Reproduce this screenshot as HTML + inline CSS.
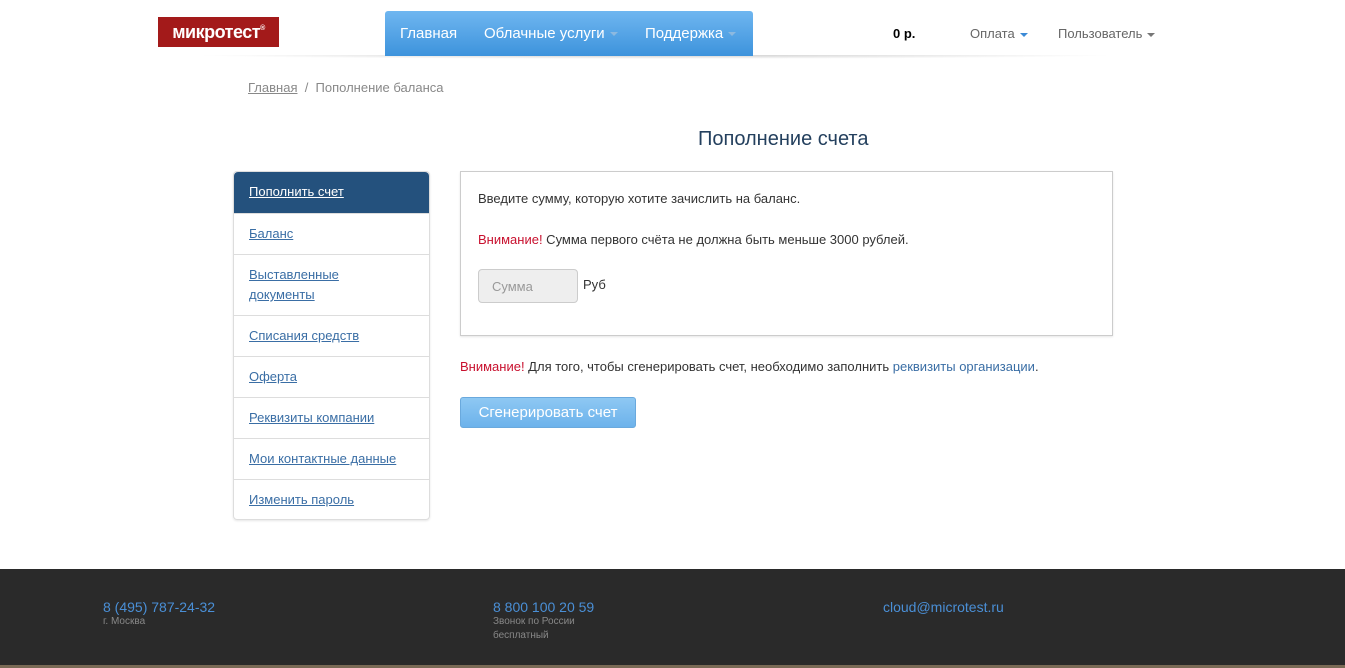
<!DOCTYPE html>
<html><head><meta charset="utf-8"><style>
*{margin:0;padding:0;box-sizing:border-box}
body{width:1345px;height:668px;overflow:hidden;background:#fff;font-family:"Liberation Sans","DejaVu Sans",sans-serif;font-size:13px;color:#333;position:relative}
.abs{position:absolute}
.logo{left:158px;top:17px;width:121px;height:30px;background:#a31a1a;color:#fff;font-size:18px;font-weight:bold;text-align:center;line-height:30px;letter-spacing:-0.5px}
.logo sup{font-size:7px;position:relative;top:-8px;vertical-align:baseline;line-height:0}
.nav{left:385px;top:11px;width:368px;height:45px;background:linear-gradient(#6fb6f0,#3d93dc);border-radius:3px 3px 0 0;color:#fff;font-size:15px}
.nav span{position:absolute;top:14px}
.car{display:inline-block;width:0;height:0;border-left:4px solid transparent;border-right:4px solid transparent;border-top:4px solid #8cb9e0;vertical-align:middle;margin-left:5px}
.shadow{left:190px;top:55px;width:930px;height:4px;background:radial-gradient(ellipse at top,#ccc,rgba(255,255,255,0) 70%)}
.top{top:26px;font-size:13px;color:#666}
.crumb{left:248px;top:80px;color:#888}
.crumb u{color:#888}
h1{position:absolute;left:698px;top:128px;font-size:20px;font-weight:normal;color:#24405e}
.side{left:233px;top:171px;width:197px;height:349px;border:1px solid #ddd;border-radius:4px;box-shadow:0 1px 2px rgba(0,0,0,.1)}
.side div{border-bottom:1px solid #ddd;padding:0 15px;color:#3a6ea5;text-decoration:underline;font-size:13px;line-height:20px}
.side .act{background:#24517d;color:#fff;border-radius:4px 4px 0 0;height:42px;padding-top:10px}
.box{left:460px;top:171px;width:653px;height:165px;border:1px solid #ccc;box-shadow:0 1px 2px rgba(0,0,0,.1)}
.red{color:#c8102e}
.inp{left:478px;top:269px;width:100px;height:34px;background:#eee;border:1px solid #ccc;border-radius:4px;color:#999;padding:9px 13px}
.btn{left:460px;top:397px;width:176px;height:31px;background:linear-gradient(#8ec8f3,#6cb2eb);border:1px solid #6aa9dd;border-radius:3px;color:#fff;font-size:15px;text-align:center;line-height:29px}
.foot{left:0;top:569px;width:1345px;height:99px;background:#2a2a2a}
.strip{left:0;top:665px;width:1345px;height:3px;background:#7a6a55}
.ph{color:#4a8fd6;font-size:14px}
.sm{color:#888;font-size:10px;line-height:14px}
</style></head><body>
<div class="abs logo">микротест<sup>®</sup></div>
<div class="abs shadow"></div>
<div class="abs nav"><span style="left:15px">Главная</span><span style="left:99px">Облачные услуги<i class="car"></i></span><span style="left:260px">Поддержка<i class="car"></i></span></div>
<div class="abs top" style="left:893px;color:#000;font-weight:bold">0 р.</div>
<div class="abs top" style="left:970px">Оплата<i class="car" style="border-top-color:#3b8ad6"></i></div>
<div class="abs top" style="left:1058px">Пользователь<i class="car" style="border-top-color:#777"></i></div>
<div class="abs crumb"><u>Главная</u> &nbsp;/&nbsp; Пополнение баланса</div>
<h1>Пополнение счета</h1>
<div class="abs side">
<div class="act">Пополнить счет</div>
<div style="height:41px;padding-top:10px">Баланс</div>
<div style="height:61px;padding-top:10px">Выставленные<br>документы</div>
<div style="height:41px;padding-top:10px">Списания средств</div>
<div style="height:41px;padding-top:10px">Оферта</div>
<div style="height:41px;padding-top:10px">Реквизиты компании</div>
<div style="height:41px;padding-top:10px">Мои контактные данные</div>
<div style="height:40px;padding-top:10px;border:0">Изменить пароль</div>
</div>
<div class="abs box"></div>
<div class="abs" style="left:478px;top:191px">Введите сумму, которую хотите зачислить на баланс.</div>
<div class="abs" style="left:478px;top:232px"><span class="red">Внимание!</span> Сумма первого счёта не должна быть меньше 3000 рублей.</div>
<div class="abs inp">Сумма</div>
<div class="abs" style="left:583px;top:277px">Руб</div>
<div class="abs" style="left:460px;top:359px"><span class="red">Внимание!</span> Для того, чтобы сгенерировать счет, необходимо заполнить <span style="color:#3a6ea5">реквизиты организации</span>.</div>
<div class="abs btn">Сгенерировать счет</div>
<div class="abs foot"></div>
<div class="abs strip"></div>
<div class="abs" style="left:103px;top:599px"><div class="ph">8 (495) 787-24-32</div><div class="sm">г. Москва</div></div>
<div class="abs" style="left:493px;top:599px"><div class="ph">8 800 100 20 59</div><div class="sm">Звонок по России<br>бесплатный</div></div>
<div class="abs" style="left:883px;top:599px"><div class="ph">cloud@microtest.ru</div></div>
</body></html>
